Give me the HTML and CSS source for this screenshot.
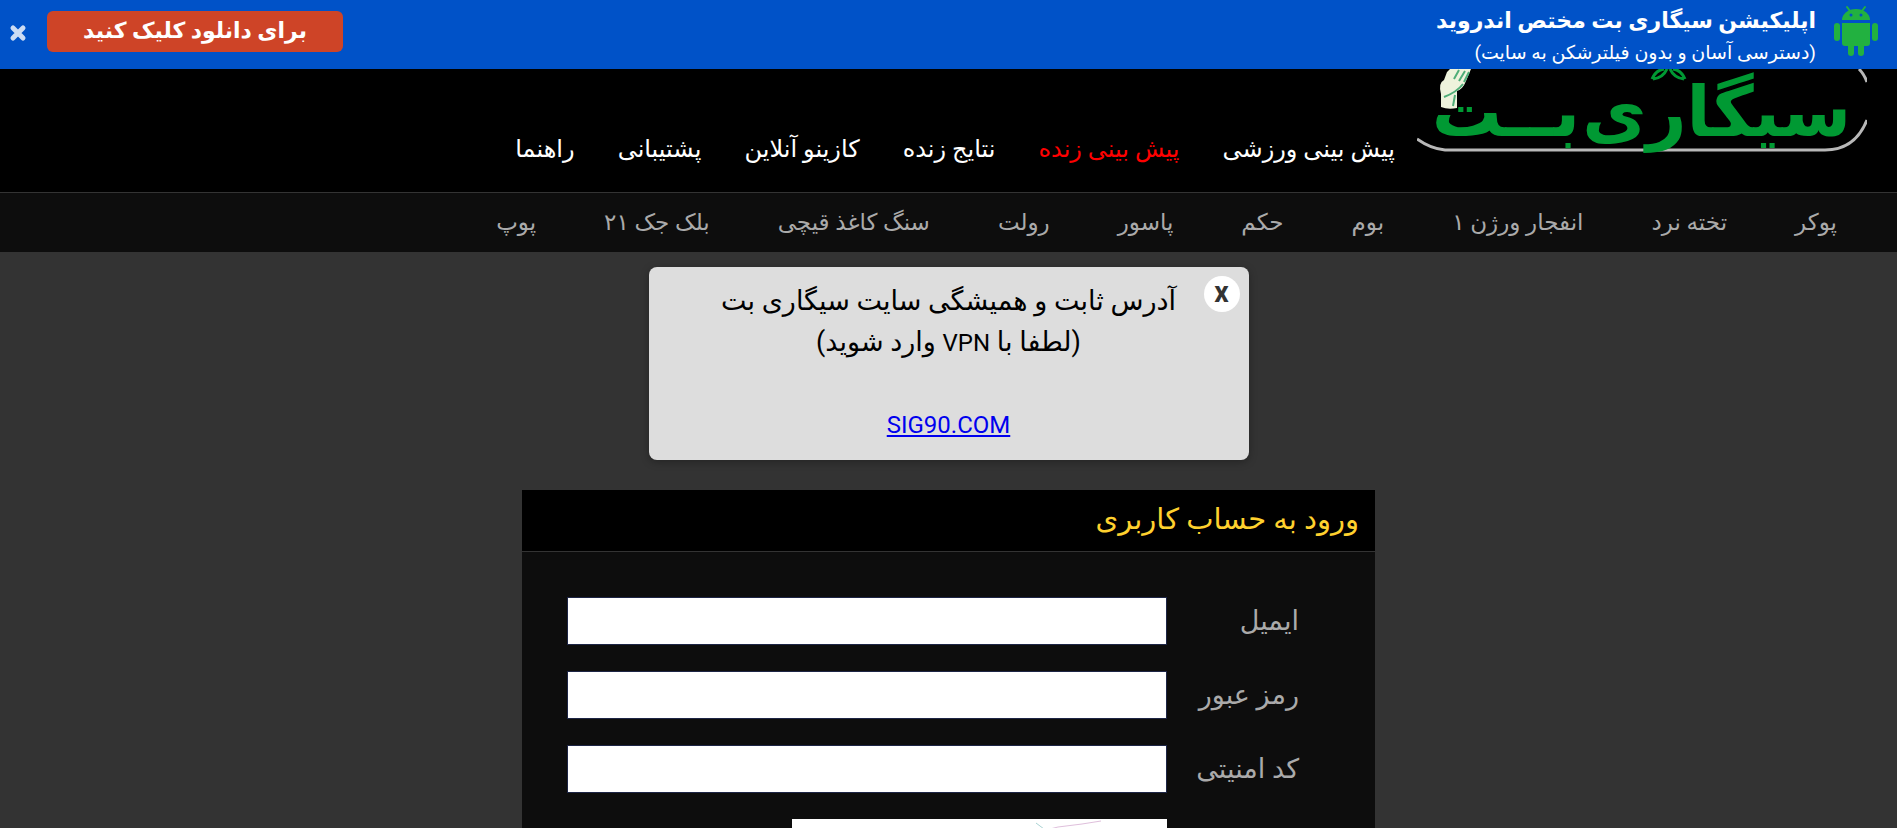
FILE: index.html
```html
<!DOCTYPE html>
<html lang="fa" dir="rtl">
  <head>
    <meta charset="utf-8" />
    <meta name="viewport" content="width=device-width, initial-scale=1" />
    <title>ورود به حساب کاربری</title>
    <link rel="stylesheet" href="styles.css">
  </head>

  <body>
    <div class="app-bar">
      <svg class="android" viewBox="0 0 46 52" width="46" height="52">
        <g fill="#22b140">
          <path d="M9 15 A14 11 0 0 1 37 15 Z" />
          <path d="M14 2 L17 6 M32 2 L29 6" stroke="#22b140" stroke-width="2" stroke-linecap="round" />
          <path d="M9 18 H37 V38 Q37 41 34 41 H12 Q9 41 9 38 Z" />
          <rect x="1" y="18" width="6" height="18" rx="3" />
          <rect x="39" y="18" width="6" height="18" rx="3" />
          <rect x="15" y="36" width="6" height="15" rx="3" />
          <rect x="25" y="36" width="6" height="15" rx="3" />
        </g>
        <circle cx="18" cy="10" r="1.5" fill="#0052c8" />
        <circle cx="28" cy="10" r="1.5" fill="#0052c8" />
      </svg>
      <div class="app-text">
        <strong>اپلیکیشن سیگاری بت مختص اندروید</strong>
        <span>(دسترسی آسان و بدون فیلترشکن به سایت)</span>
      </div>
      <a class="download" href="#">برای دانلود کلیک کنید</a>
      <button class="bar-close" type="button" aria-label="بستن">
        <svg viewBox="0 0 18 18" width="18" height="18">
          <path d="M4 4 L14 14 M14 4 L4 14" stroke="#ccdcf4" stroke-width="5" stroke-linecap="round" />
        </svg>
      </button>
    </div>

    <header class="header">
      <a class="logo" href="#">
        <svg viewBox="0 0 450 91" width="450" height="91">
          <path d="M442 0 Q447 5 450 13 M450 51 Q438 81 408 81 H28 Q14 80 0 70" fill="none" stroke="#b8b8b8" stroke-width="3" />
          <!-- hand -->
          <path d="M24 38 V25 Q21 14 27 11 L30 3 L33 0 H54 L49 12 Q46 20 40 22 V39 Q31 41 24 38 Z" fill="#eef3dc" />
          <path d="M37 10 L42 1 M42 12 L48 2 M47 13 L52 3 M27 28 Q40 23 46 15 M36 37 L38 26" fill="none" stroke="#4fae78" stroke-width="2" />
          <text class="logo-text" x="434" y="67">سیگاری</text>
          <text class="logo-text" x="163" y="67">بــت</text>
          <!-- leaf -->
          <path d="M235 10 Q239 1 247 0 M268 10 Q264 1 256 0 M236 10 Q246 9 250 0 M267 10 Q257 9 253 0" fill="none" stroke="#009933" stroke-width="3" />
        </svg>
      </a>
      <nav class="main-nav">
        <a href="#">پیش بینی ورزشی</a>
        <a href="#" class="live">پیش بینی زنده</a>
        <a href="#">نتایج زنده</a>
        <a href="#">کازینو آنلاین</a>
        <a href="#">پشتیبانی</a>
        <a href="#">راهنما</a>
      </nav>
    </header>

    <nav class="game-nav">
      <a href="#">پوکر</a>
      <a href="#">تخته نرد</a>
      <a href="#">انفجار ورژن ۱</a>
      <a href="#">بوم</a>
      <a href="#">حکم</a>
      <a href="#">پاسور</a>
      <a href="#">رولت</a>
      <a href="#">سنگ کاغذ قیچی</a>
      <a href="#">بلک جک ۲۱</a>
      <a href="#">پوپ</a>
    </nav>

    <main class="content">
      <div class="notice">
        <button class="notice-close" type="button">X</button>
        <p>آدرس ثابت و همیشگی سایت سیگاری بت</p>
        <p>(لطفا با <span class="latin">VPN</span> وارد شوید)</p>
        <p class="address"><a class="latin" href="#">SIG90.COM</a></p>
      </div>

      <form class="login">
        <h1>ورود به حساب کاربری</h1>
        <div class="fields">
          <label for="email">ایمیل</label>
          <input type="text" id="email" name="email" />

          <label for="password">رمز عبور</label>
          <input type="password" id="password" name="password" />

          <label for="captcha">کد امنیتی</label>
          <input type="text" id="captcha" name="captcha" />

          <svg class="captcha" viewBox="0 0 375 80" width="375" height="80">
            <path d="M250 12 L266 8 L290 5 L309 2" fill="none" stroke="#dfbfdc" stroke-width="1" />
            <path d="M244 4 L252 10" stroke="#a9d3d3" stroke-width="1" />
          </svg>
        </div>
      </form>
    </main>
  </body>
</html>
```
FILE: styles.css
```css
* {
  box-sizing: border-box;
}

html {
  background-color: #fff;
}

body {
  height: 100vh;
  margin: 0 3px 0 0;
  font-family: Roboto, "DejaVu Sans", sans-serif;
  font-size: 24px;
  background-color: #333;
  overflow: hidden;
}

a {
  text-decoration: none;
}

.app-bar {
  display: flex;
  height: 69px;
  padding: 5px 18px 0 0;
  background-color: #0052c8;
  color: #fff;
}

.app-text {
  display: flex;
  flex-direction: column;
  margin-right: 17px;
}

.app-text strong {
  font-size: 22px;
  line-height: 32px;
}

.app-text span {
  font-size: 19px;
  line-height: 32px;
}

.download {
  width: 296px;
  height: 41px;
  margin: 6px auto 0 20px;
  border-radius: 6px;
  background-color: #ce4427;
  color: #fff;
  font-weight: bold;
  font-size: 22px;
  line-height: 40px;
  text-align: center;
}

.bar-close {
  height: 18px;
  margin: 19px 0 0 9px;
  padding: 0;
  border: none;
  background: none;
  cursor: pointer;
}

.bar-close svg,
.logo svg {
  display: block;
}

.header {
  display: flex;
  height: 123px;
  padding-right: 30px;
  background-color: #000;
}

.logo-text {
  font-family: "DejaVu Sans", sans-serif;
  font-weight: bold;
  font-size: 70px;
  fill: #009933;
}

.main-nav {
  display: flex;
  gap: 43px;
  padding: 60px 22px 0 0;
  line-height: 40px;
}

.main-nav a {
  color: #fff;
}

.main-nav .live {
  color: #f00;
}

.game-nav {
  display: flex;
  gap: 68px;
  height: 60px;
  padding: 0 60px;
  border-top: 1px solid #333;
  background-color: #0d0d0d;
  font-size: 23px;
  line-height: 59px;
}

.game-nav a {
  color: #aaa;
}

.notice {
  position: relative;
  width: 600px;
  margin: 15px auto 30px;
  padding: 14px 14px 15px;
  border-radius: 8px;
  background-color: #ddd;
  box-shadow: 0 2px 8px rgba(0, 0, 0, 0.3);
  text-align: center;
}

.notice p {
  margin: 0;
  font-size: 27px;
  line-height: 41px;
}

.notice .address {
  margin-top: 41px;
}

.notice a {
  color: #00e;
  text-decoration: underline;
}

.latin {
  font-size: 24px;
  line-height: 24px;
}

.notice-close {
  position: absolute;
  top: 9px;
  right: 9px;
  width: 36px;
  height: 36px;
  padding: 0;
  border: none;
  border-radius: 50%;
  background-color: #fff;
  color: #333;
  font-family: Roboto, sans-serif;
  font-size: 22px;
  font-weight: 900;
  cursor: pointer;
}

.login {
  width: 853px;
  margin: 0 auto;
  background-color: #0d0d0d;
}

.login h1 {
  margin: 0;
  padding: 0 16px 2px;
  border-bottom: 1px solid #333;
  background-color: #000;
  color: #ffd12e;
  font-size: 29px;
  font-weight: normal;
  line-height: 59px;
}

.fields {
  display: grid;
  grid-template-columns: 132px 1fr;
  row-gap: 26px;
  align-items: center;
  padding: 45px 76px 45px 45px;
}

.fields label {
  color: #aaa;
  font-size: 27px;
}

.fields input {
  width: 100%;
  height: 48px;
  padding: 0 10px;
  border: 1px solid #1d2545;
  background-color: #fff;
  font-size: 24px;
}

.captcha {
  grid-column: 2;
  background-color: #fff;
}
```
